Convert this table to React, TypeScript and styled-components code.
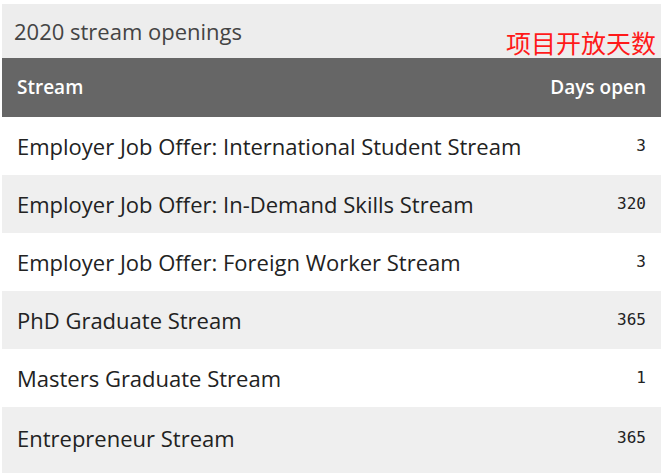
import styled, { createGlobalStyle } from "styled-components"

const GlobalStyle = createGlobalStyle`
  body {
    margin: 0;
    background: #fff;
    font-family: "Open Sans", "Noto Sans", sans-serif;
  }
`

const rows = [
  { name: "Employer Job Offer: International Student Stream", days: "3" },
  { name: "Employer Job Offer: In-Demand Skills Stream", days: "320" },
  { name: "Employer Job Offer: Foreign Worker Stream", days: "3" },
  { name: "PhD Graduate Stream", days: "365" },
  { name: "Masters Graduate Stream", days: "1" },
  { name: "Entrepreneur Stream", days: "365" },
]

export default function App() {
  return (
    <>
      <GlobalStyle />
      <Wrapper>
        <TitleBar>
          <Title>2020 stream openings</Title>
          <Note>项目开放天数</Note>
        </TitleBar>
        <HeadRow>
          <HeadCell>Stream</HeadCell>
          <HeadCell>Days open</HeadCell>
        </HeadRow>
        {rows.map((r, i) => (
          <Row key={r.name} $odd={i % 2 === 1} $last={i === rows.length - 1}>
            <Name>{r.name}</Name>
            <Days>{r.days}</Days>
          </Row>
        ))}
      </Wrapper>
    </>
  )
}

const Wrapper = styled.div`
  width: 659px;
  margin: 4px 0 0 2px;
`
const TitleBar = styled.div`
  position: relative;
  height: 54px;
  background: #ededed;
  display: flex;
  align-items: center;
  padding: 0 12px;
`
const Title = styled.div`
  font-size: 22px;
  color: #444;
  margin-top: 0;
`
const Note = styled.div`
  position: absolute;
  right: 5px;
  bottom: 1px;
  font-family: "Noto Sans CJK SC", sans-serif;
  font-size: 25px;
  line-height: 30px;
  color: #ff1a1a;
`
const HeadRow = styled.div`
  height: 59px;
  background: #666;
  display: flex;
  align-items: center;
  justify-content: space-between;
  padding: 0 15px;
`
const HeadCell = styled.div`
  color: #fff;
  font-size: 19px;
  font-weight: 600;
  margin-top: -2px;
`
const Row = styled.div<{ $odd: boolean; $last: boolean }>`
  height: ${(p) => (p.$last ? "62px" : "58px")};
  background: ${(p) => (p.$odd ? "#efefef" : "#fff")};
  display: flex;
  align-items: center;
  justify-content: space-between;
  padding: 0 15px;
  padding-bottom: ${(p) => (p.$last ? "4px" : "0")};
`
const Name = styled.div`
  font-size: 22px;
  color: #222;
`
const Days = styled.div`
  font-family: "DejaVu Sans Mono", monospace;
  font-size: 16px;
  color: #222;
  margin-top: -2px;
`
